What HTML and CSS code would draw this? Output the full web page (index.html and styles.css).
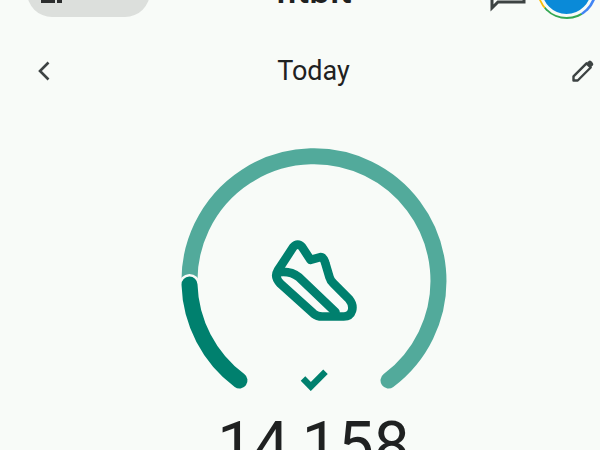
FILE: index.html
```html
<!DOCTYPE html>
<html lang="en">

<head>
    <meta charset="UTF-8">
    <meta name="viewport" content="width=device-width, initial-scale=1.0">
    <title>Today</title>
    <link rel="stylesheet" href="styles.css">
</head>

<body>
    <header class="appBar">
        <div class="pill">
            <svg class="pillIcon" viewBox="0 0 21 22"><path d="M0 14h3v5h11v3H0zM16 14h5v8h-5z" fill="#2b2d2d"/></svg>
        </div>
        <div class="logo">fitbit</div>
        <div class="appActions">
            <svg class="chat" viewBox="0 0 38 38"><path d="M3 33V4h32v23H9z" fill="none" stroke="#3d4343" stroke-width="3"/></svg>
            <div class="avatar"><div class="avatarFace"></div></div>
        </div>
    </header>

    <nav class="subBar">
        <svg class="navIcon backIcon" viewBox="0 0 24 24"><path d="M15.5 3.5 7 12l8.5 8.5" fill="none" stroke="#3d4343" stroke-width="2.6"/></svg>
        <h1>Today</h1>
        <svg class="navIcon editIcon" viewBox="0 0 24 24">
            <path d="M2.5 21.5v-4.2L15.5 4.3l4.2 4.2-13 13z" fill="none" stroke="#3d4343" stroke-width="2.4" stroke-linejoin="round"/>
            <path d="M15.5 4.3l2-2a2 2 0 0 1 2.8 0l1.4 1.4a2 2 0 0 1 0 2.8l-2 2z" fill="#3d4343"/>
        </svg>
    </nav>

    <main class="gaugeWrap">
        <svg class="gauge" viewBox="0 0 280 252">
            <path class="arcLight" d="M15.5 143.5A124.5 124.5 0 1 1 214.5 239.5"/>
            <path class="arcGap" d="M15.5 143.5A124.5 124.5 0 0 0 65.5 239.5"/>
            <path class="arcDark" d="M15.5 143.5A124.5 124.5 0 0 0 65.5 239.5"/>
            <g class="shoe" transform="translate(86.5 89.5) scale(.3333)">
                <path d="M52 120 98 50Q112 35 125 50L150 88 180 80Q190 80 195 100L207 140Q210 150 218 158L265 205C285 230 275 258 250 258H185Q170 258 160 250L60 160Q40 140 52 120Z"/>
                <path d="M55 125Q90 120 115 140L225 245"/>
            </g>
        </svg>
        <svg class="check" viewBox="0 0 28 22"><path d="M3 9.5 10.8 17.5 25.5 2.8" fill="none" stroke="#00806e" stroke-width="6.4"/></svg>
        <div class="steps">14,158</div>
    </main>
</body>

</html>
```

FILE: styles.css
```css
html,
body {
    height: 100%;
    overflow: hidden;
}

body {
    margin: 0;
    background-color: #f8fbf8;
    font-family: Roboto, "Noto Sans", sans-serif;
    color: #1f2121;
}

.appBar {
    display: grid;
    grid-template-columns: 1fr auto 1fr;
    grid-template-rows: 19px;
    align-items: end;
    padding-left: 27px;
}

.pill {
    display: flex;
    align-items: flex-end;
    width: 123px;
    height: 50px;
    margin-bottom: 2px;
    padding: 0 0 14px 14px;
    box-sizing: border-box;
    border-radius: 0 0 25px 25px;
    background-color: #dcdfdc;
}

.pillIcon {
    width: 21px;
    height: 22px;
}

.logo {
    margin-bottom: 10px;
    font-size: 37px;
    line-height: 36px;
    font-weight: 500;
}

.appActions {
    display: flex;
    align-items: flex-end;
    justify-content: flex-end;
    gap: 9.5px;
    padding-right: 3.5px;
}

.chat {
    width: 38px;
    height: 38px;
    margin-bottom: 6.5px;
}

.avatar {
    display: flex;
    align-items: center;
    justify-content: center;
    width: 60px;
    height: 60px;
    flex: none;
    border-radius: 50%;
    background: conic-gradient(#4285f4 0 150deg, #34a853 150deg 230deg, #fbbc05 230deg 290deg, #ea4335 290deg);
}

.avatarFace {
    width: 49px;
    height: 49px;
    border: 3.5px solid #f8fbf8;
    border-radius: 50%;
    background-color: #0a8ad8;
}

.subBar {
    display: grid;
    grid-template-columns: 1fr auto 1fr;
    align-items: center;
    height: 36px;
    margin-top: 34px;
    padding-left: 27px;
}

.subBar h1 {
    margin: 0;
    font-size: 27px;
    font-weight: 400;
}

.navIcon {
    width: 24px;
    height: 24px;
}

.backIcon {
    margin-left: 6px;
}

.editIcon {
    justify-self: end;
    margin-right: 5px;
}

.gaugeWrap {
    display: flex;
    flex-direction: column;
    align-items: center;
    height: 361px;
    margin-left: 27px;
    overflow: hidden;
}

.gauge {
    flex: none;
    width: 280px;
    height: 252px;
    margin-top: 51.5px;
}

.gauge path {
    fill: none;
}

.arcLight {
    stroke: #52aa9b;
    stroke-width: 16;
    stroke-linecap: round;
}

.arcGap {
    stroke: #f8fbf8;
    stroke-width: 21;
    stroke-linecap: round;
}

.arcDark {
    stroke: #00806e;
    stroke-width: 16;
    stroke-linecap: round;
}

.shoe path {
    stroke: #00806e;
    stroke-width: 26;
    stroke-linejoin: round;
    stroke-linecap: round;
}

.check {
    flex: none;
    width: 28px;
    height: 22px;
    margin-top: -23.5px;
}

.steps {
    flex: none;
    margin-top: 22.5px;
    font-size: 64px;
    line-height: 64px;
}
```
